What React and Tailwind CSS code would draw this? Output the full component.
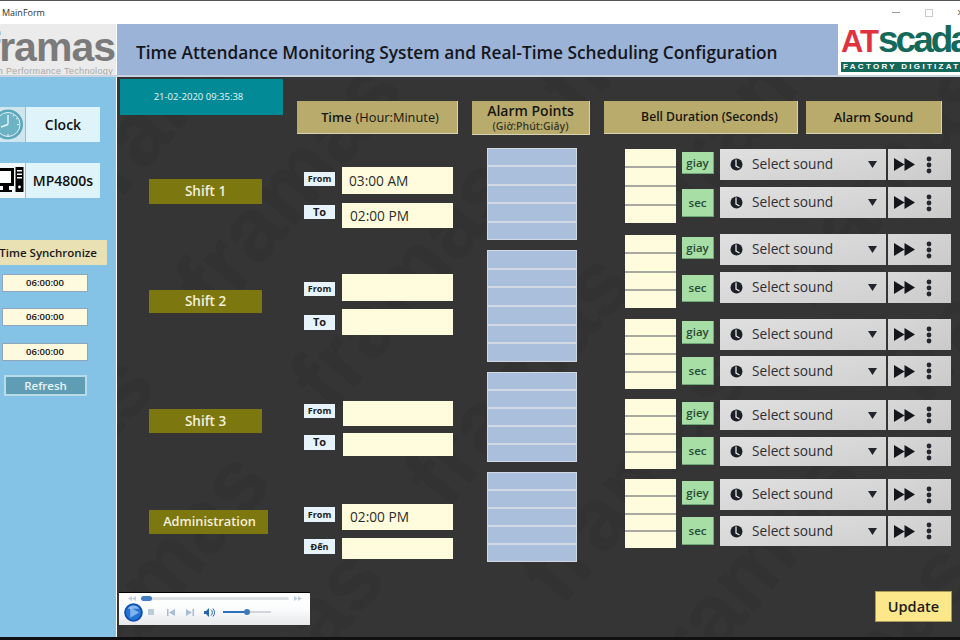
const FONT = "font-['Open_Sans','Noto_Sans',sans-serif]"

// the right hand columns do not line up with the shifts, so each one has its own spacing
const TIME_ROWS = [
  { label: 'From', value: '03:00 AM', row: 'mt-[33px] h-[27px]', tag: 'mt-[5px] h-[14px] text-[9px]', input: 'ml-[7px] w-[111px] pl-[7px] pt-[1px]' },
  { label: 'To', value: '02:00 PM', row: 'mt-[9px] h-[25px]', tag: 'mt-[2px] h-[14px] text-[11px]', input: 'ml-[7px] w-[111px] pl-[8px] pt-[1px]' },
  { label: 'From', value: '', row: 'mt-[46px] h-[27px]', tag: 'mt-[8px] h-[14px] text-[9px]', input: 'ml-[7px] w-[111px]' },
  { label: 'To', value: '', row: 'mt-[8px] h-[26px]', tag: 'mt-[6px] h-[15px] text-[11px]', input: 'ml-[7px] w-[111px]' },
  { label: 'From', value: '', row: 'mt-[66px] h-[25px]', tag: 'mt-[3px] h-[14px] text-[9px]', input: 'ml-[8px] w-[110px]' },
  { label: 'To', value: '', row: 'mt-[7px] h-[23px]', tag: 'mt-[2px] h-[15px] text-[11px]', input: 'ml-[8px] w-[110px]' },
  { label: 'From', value: '02:00 PM', row: 'mt-[48px] h-[26px]', tag: 'mt-[3px] h-[15px] text-[9px]', input: 'ml-[7px] w-[111px] pl-[8px]' },
  { label: 'Đến', value: '', row: 'mt-[8px] h-[21px]', tag: 'mt-[1px] h-[15px] text-[9px]', input: 'ml-[7px] w-[111px]' },
]

const ALARM_STACKS = [
  { size: 'mt-[13px] h-[92px]', rows: 5 },
  { size: 'mt-[10px] h-[112px]', rows: 6 },
  { size: 'mt-[10px] h-[90px]', rows: 5 },
  { size: 'mt-[10px] h-[90px]', rows: 5 },
]

const BELL_STACKS = ['mt-[15px] h-[74px]', 'mt-[12px] h-[73px]', 'mt-[11px] h-[70px]', 'mt-[10px] h-[70px]', 'mt-[10px] h-[69px]']

const UNIT_TAGS = [
  { label: 'giay', size: 'mt-[18px] h-[22px]' },
  { label: 'sec', size: 'mt-[15px] h-[28px]' },
  { label: 'giay', size: 'mt-[20px] h-[22px]' },
  { label: 'sec', size: 'mt-[16px] h-[27px]' },
  { label: 'giay', size: 'mt-[19px] h-[23px]' },
  { label: 'sec', size: 'mt-[13px] h-[28px]' },
  { label: 'giey', size: 'mt-[17px] h-[23px]' },
  { label: 'sec', size: 'mt-[12px] h-[28px]' },
  { label: 'giey', size: 'mt-[16px] h-[24px]' },
  { label: 'sec', size: 'mt-[12px] h-[28px]' },
]

const SOUND_ROWS = [
  'mt-[15px] h-[31px]', 'mt-[7px] h-[31px]', 'mt-[16px] h-[31px]', 'mt-[7px] h-[31px]', 'mt-[16px] h-[31px]',
  'mt-[6px] h-[30px]', 'mt-[14px] h-[30px]', 'mt-[7px] h-[29px]', 'mt-[13px] h-[31px]', 'mt-[6px] h-[30px]',
]

const SHIFTS = [
  { label: 'Shift 1', size: 'mt-[64px] h-[25px] w-[113px] text-[13.500px]' },
  { label: 'Shift 2', size: 'mt-[86px] h-[23px] w-[113px] text-[13.500px]' },
  { label: 'Shift 3', size: 'mt-[96px] h-[24px] w-[113px] text-[13.500px]' },
  { label: 'Administration', size: 'mt-[77px] h-[24px] w-[119px] pl-[2px] text-[12.800px]' },
]

const WATERMARK = Array.from({ length: 20 }, (_, i) => i)

function ClockIcon() {
  return (
    <svg width="25" height="35" viewBox="0 0 25 35">
      <rect width="25" height="35" fill="#cfe6ee" />
      <circle cx="8" cy="17.5" r="15" fill="#5ba6ba" />
      <circle cx="8" cy="17.5" r="12" fill="#6db3c5" stroke="#e4f3f7" strokeWidth="1" />
      <path d="M8 17.5V8M8 17.5L1 20" stroke="#e8f5f8" strokeWidth="1.4" fill="none" />
      <path d="M17 17.5h2M8 27v2M13 9.5l1-1.5M16 12l1.500-1" stroke="#e8f5f8" strokeWidth="1" />
    </svg>
  )
}

function ComputerIcon() {
  return (
    <svg width="25" height="35" viewBox="0 0 25 35">
      <rect width="25" height="35" fill="#f2f7f9" />
      <path d="M0 5h14v18H0z" fill="#000" />
      <path d="M0 8h11v12H0z" fill="#fff" />
      <path d="M3 23h6v4h3v2H0v-2h3z" fill="#000" />
      <path d="M15.500 4h8v25h-8z" fill="#000" />
      <path d="M17 7h5v1.500h-5zM17 10.500h5V12h-5zM17 14h5v1.500h-5z" fill="#fff" />
      <circle cx="19.500" cy="24" r="1.400" fill="#fff" />
    </svg>
  )
}

function SoundIcon() {
  return (
    <svg width="13" height="13" viewBox="0 0 13 13" className="shrink-0">
      <circle cx="6.500" cy="6.500" r="6" fill="#1c1f26" />
      <path d="M6 1.500V8l3.500 2" stroke="#e4e4e4" strokeWidth="1.300" fill="none" />
    </svg>
  )
}

function SoundRow({ size }) {
  return (
    <div className={`flex gap-[2px] ${size}`}>
      <div className="flex w-[166px] items-center bg-gradient-to-br from-[#e0e0e0] to-[#d0d0d0] pl-[10px] pr-[9px]">
        <SoundIcon />
        <span className="ml-[9px] flex-1 text-[13.700px] text-[#2e2e33]">Select sound</span>
        <svg width="9" height="7" viewBox="0 0 9 7"><path d="M0 0h9L4.500 7z" fill="#22252c" /></svg>
      </div>
      <div className="flex w-[63px] items-center bg-gradient-to-br from-[#d8d8d8] to-[#cacaca] pl-[6px]">
        <svg width="21" height="13" viewBox="0 0 21 13"><path d="M0 0l10.500 6.500L0 13zM10.500 0L21 6.500 10.500 13z" fill="#14161c" /></svg>
        <svg width="6" height="18" viewBox="0 0 6 18" className="ml-[11px]">
          <circle cx="3" cy="3" r="2.400" fill="#24272e" />
          <circle cx="3" cy="9" r="2.400" fill="#24272e" />
          <circle cx="3" cy="15" r="2.400" fill="#24272e" />
        </svg>
      </div>
    </div>
  )
}

function MediaPlayer() {
  return (
    <div className="ml-[2px] flex h-[33px] w-[191px] flex-col border-t border-black bg-gradient-to-b from-white via-[#fbfcfd] to-[#e6e8ea] pl-[2px]">
      <div className="mt-[3px] flex h-[5px] items-center">
        <svg width="8" height="5" viewBox="0 0 8 5" className="ml-[7px]"><path d="M4 0v5L0 2.500zM8 0v5L4 2.500z" fill="#c3cfdb" /></svg>
        <div className="relative ml-[5px] h-[3px] w-[148px] rounded-full bg-[#dcdfe3]">
          <div className="absolute -top-[1px] left-0 h-[5px] w-[11px] rounded-full bg-[#3f7fc4]" />
        </div>
        <svg width="8" height="5" viewBox="0 0 8 5" className="ml-[5px]"><path d="M0 0v5l4-2.500zM4 0v5l4-2.500z" fill="#c3cfdb" /></svg>
      </div>
      <div className="mt-[1px] flex h-[20px] items-center">
        <svg width="19" height="19" viewBox="0 0 20 20" className="ml-[3px]">
          <circle cx="10" cy="10" r="9.800" fill="#0f4fb0" />
          <circle cx="10" cy="10" r="7.800" fill="#2374d4" />
          <path d="M6.500 4.500v11L16 10z" fill="#7fb3ea" />
          <path d="M4 6a7 7 0 0112 0z" fill="#cfe3f8" fillOpacity="0.6" />
        </svg>
        <div className="ml-[5px] h-[6px] w-[6px] bg-[#bccbdb]" />
        <svg width="8" height="7" viewBox="0 0 8 7" className="ml-[13px]"><path d="M0 0h1.500v7H0zM8 0v7L2 3.500z" fill="#a9bdd2" /></svg>
        <svg width="8" height="7" viewBox="0 0 8 7" className="ml-[11px]"><path d="M0 0v7l6-3.500zM6.500 0H8v7H6.500z" fill="#a9bdd2" /></svg>
        <svg width="11" height="9" viewBox="0 0 11 9" className="ml-[10px]">
          <path d="M0 3h2l3-3v9L2 6H0z" fill="#2a66ad" />
          <path d="M7 1.500a4 4 0 010 6M9 .5a6 6 0 010 8" stroke="#2a66ad" strokeWidth="1" fill="none" />
        </svg>
        <div className="relative ml-[8px] h-[2px] w-[48px] bg-[#d2d5d9]">
          <div className="h-[2px] w-[24px] bg-[#2f6fc0]" />
          <div className="absolute -top-[2px] left-[21px] h-[6px] w-[6px] rounded-full bg-[#3d79bd]" />
        </div>
      </div>
    </div>
  )
}

export default function App() {
  return (
    <div className={`flex h-[640px] w-[960px] flex-col overflow-hidden bg-white ${FONT}`}>
      {/* Title bar */}
      <div className="flex h-[24px] shrink-0 items-center overflow-hidden border-t border-[#555] bg-white pl-[2px]">
        <span className="w-[890px] shrink-0 text-[9px] text-[#333]">MainForm</span>
        <div className="h-[1px] w-[8px] shrink-0 bg-[#999]" />
        <div className="ml-[25px] h-[8px] w-[8px] shrink-0 border border-[#ccc]" />
        <span className="ml-[24px] shrink-0 text-[12px] leading-none text-[#555]">×</span>
      </div>

      {/* Logos + title */}
      <div className="flex h-[53px] shrink-0 border-b-2 border-[#c8d3e2]">
        <div className="relative w-[117px] shrink-0 overflow-hidden border-r border-white bg-[#ebebeb]">
          <span className="absolute right-[1px] top-[1px] font-['Liberation_Sans',sans-serif] text-[41px] font-bold leading-[44px] tracking-[-1px] text-[#7b7b7b]">framas</span>
          <span className="absolute right-[3px] top-[41px] whitespace-nowrap font-['Liberation_Sans',sans-serif] text-[9.100px] leading-[12px] tracking-[0.3px] text-[#a8a8a8]">High Performance Technology</span>
        </div>
        <div className="flex w-[721px] items-center bg-[#9bb3d6] pl-[19px] pt-[6px]">
          <h1 className="whitespace-nowrap text-[17.300px] font-semibold text-[#14161c]">Time Attendance Monitoring System and Real-Time Scheduling Configuration</h1>
        </div>
        <div className="relative w-[122px] overflow-hidden bg-white">
          <div className="absolute left-[3px] top-[-6px] whitespace-nowrap font-['Liberation_Sans',sans-serif] text-[37px] font-bold leading-[44px] tracking-[-3px]">
            <span className="text-[31px] tracking-[-1px] text-[#e0323f]">AT</span>
            <span className="text-[#14695a]">scada</span>
          </div>
          <div className="absolute left-[3px] top-[38px] h-[10px] w-[130px] whitespace-nowrap bg-[#14695a] pl-[2px] font-['Liberation_Sans',sans-serif] text-[8px] font-bold leading-[10px] tracking-[2.300px] text-white">FACTORY DIGITIZATION</div>
        </div>
      </div>

      <div className="flex min-h-0 flex-1">
        {/* Left panel */}
        <div className="flex w-[117px] shrink-0 flex-col border-r border-white bg-[#85c3e6]">
          <div className="mt-[30px] flex h-[35px] gap-[1px]">
            <ClockIcon />
            <div className="flex w-[74px] items-center justify-center bg-[#dff3fb] text-[14px] font-semibold text-[#111]">Clock</div>
          </div>
          <div className="mt-[21px] flex h-[35px] gap-[1px]">
            <ComputerIcon />
            <div className="flex w-[74px] items-center justify-center bg-[#dff3fb] text-[14px] font-semibold text-[#111]">MP4800s</div>
          </div>
          <div className="mt-[42px] flex h-[25px] w-[107px] items-center justify-end whitespace-nowrap bg-[#e9e0b4] pr-[10px] text-[11.500px] font-semibold text-[#1a1a1a]">Time Synchronize</div>
          {['mt-[9px]', 'mt-[16px]', 'mt-[17px]'].map((m, i) => (
            <div key={i} className={`${m} ml-[2px] flex h-[18px] w-[86px] items-center justify-center border border-[#8fa6bb] bg-[#fefadf] text-[9.500px] font-semibold text-[#111]`}>06:00:00</div>
          ))}
          <div className="ml-[4px] mt-[14px] flex h-[21px] w-[83px] items-center justify-center border-2 border-[#b9dbe8] bg-[#5f9db4] text-[11.500px] font-semibold text-[#e9f4f7]">Refresh</div>
        </div>

        {/* Main panel */}
        <div className="relative flex flex-1 flex-col bg-[#353535]">
          <div className="absolute inset-0 overflow-hidden">
            <div className="absolute left-[-140px] top-[-220px] flex h-[1000px] w-[1130px] rotate-[-50deg] flex-wrap content-start gap-x-[90px] gap-y-[60px]">
              {WATERMARK.map(i => (
                <span key={i} className="font-['Liberation_Sans',sans-serif] text-[90px] font-bold leading-none text-[#323232]">framas</span>
              ))}
            </div>
          </div>

          <div className="relative flex h-[515px]">
            {/* Date + shift names */}
            <div className="flex w-[180px] flex-col pl-[3px]">
              <div className="mt-[2px] flex h-[36px] w-[163px] items-center justify-center bg-[#028a96] pr-[6px] pt-[1px] text-[9.500px] text-[#e8f6f7]">21-02-2020 09:35:38</div>
              {SHIFTS.map(s => (
                <div key={s.label} className={`${s.size} ml-[29px] flex items-center justify-center bg-[#7d7710] font-semibold text-[#f2f0da]`}>{s.label}</div>
              ))}
            </div>

            {/* Time */}
            <div className="flex w-[175px] flex-col">
              <div className="mt-[24px] flex h-[33px] w-[161px] items-center justify-center border-b border-r border-[#d8d3b0] bg-[#b9ab6c] pl-[6px] pt-[1px] text-[12.800px] font-semibold text-[#16160f]">
                Time<span className="ml-1 font-normal">(Hour:Minute)</span>
              </div>
              {TIME_ROWS.map((r, i) => (
                <div key={i} className={`flex pl-[7px] ${r.row}`}>
                  <div className={`flex w-[31px] items-center justify-center bg-[#e6f3fb] font-bold text-[#1a1a1a] ${r.tag}`}>{r.label}</div>
                  <div className={`flex items-center bg-[#fefcdc] text-[13.700px] text-[#2c2c2c] ${r.input}`}>{r.value}</div>
                </div>
              ))}
            </div>

            {/* Alarm points */}
            <div className="flex w-[132px] flex-col">
              <div className="mt-[24px] flex h-[34px] w-[118px] flex-col items-center justify-center border-b border-r border-[#d8d3b0] bg-[#b9ab6c] text-[#16160f]">
                <span className="text-[14px] font-semibold leading-[16px]">Alarm Points</span>
                <span className="text-[10.500px] font-semibold leading-[14px] text-[#3a3a2a]">(Giờ:Phút:Giây)</span>
              </div>
              {ALARM_STACKS.map((stack, i) => (
                <div key={i} className={`${stack.size} ml-[15px] flex w-[90px] flex-col`}>
                  {Array.from({ length: stack.rows }, (_, j) => (
                    <div key={j} className="flex-1 border border-[#d3d9e2] bg-[#aabfdc]" />
                  ))}
                </div>
              ))}
            </div>

            {/* Bell + sound */}
            <div className="flex flex-1 flex-col">
              <div className="mt-[24px] flex h-[33px] gap-[8px]">
                <div className="flex w-[194px] items-center justify-center border-b border-r border-[#d8d3b0] bg-[#b9ab6c] pl-[18px] pt-[1px] text-[12.200px] font-semibold text-[#16160f]">Bell Duration (Seconds)</div>
                <div className="flex w-[136px] items-center justify-center border-b border-r border-[#d8d3b0] bg-[#b9ab6c] pt-[1px] text-[12.800px] font-semibold text-[#16160f]">Alarm Sound</div>
              </div>
              <div className="ml-[21px] flex">
                <div className="flex w-[51px] flex-col">
                  {BELL_STACKS.map((size, i) => (
                    <div key={i} className={`${size} flex flex-col divide-y-2 divide-[#a9a9a2]`}>
                      {[0, 1, 2, 3].map(j => <div key={j} className="flex-1 bg-[#fefcdc]" />)}
                    </div>
                  ))}
                </div>
                <div className="ml-[6px] flex w-[32px] flex-col">
                  {UNIT_TAGS.map((t, i) => (
                    <div key={i} className={`${t.size} flex items-center justify-center border-b border-r border-[#6fa878] bg-[#a6dea6] text-[11.500px] font-semibold text-[#2b4a34]`}>{t.label}</div>
                  ))}
                </div>
                <div className="ml-[6px] flex flex-col">
                  {SOUND_ROWS.map((size, i) => <SoundRow key={i} size={size} />)}
                </div>
              </div>
            </div>
          </div>

          {/* Player + update */}
          <div className="relative flex items-start">
            <MediaPlayer />
            <button className="-mt-[1px] ml-auto mr-[8px] h-[31px] w-[77px] border border-[#a79a55] bg-[#fce88a] text-[14.500px] font-semibold text-[#1c1c1c]">Update</button>
          </div>
        </div>
      </div>
      <div className="h-[3px] shrink-0 bg-[#111]" />
    </div>
  )
}
